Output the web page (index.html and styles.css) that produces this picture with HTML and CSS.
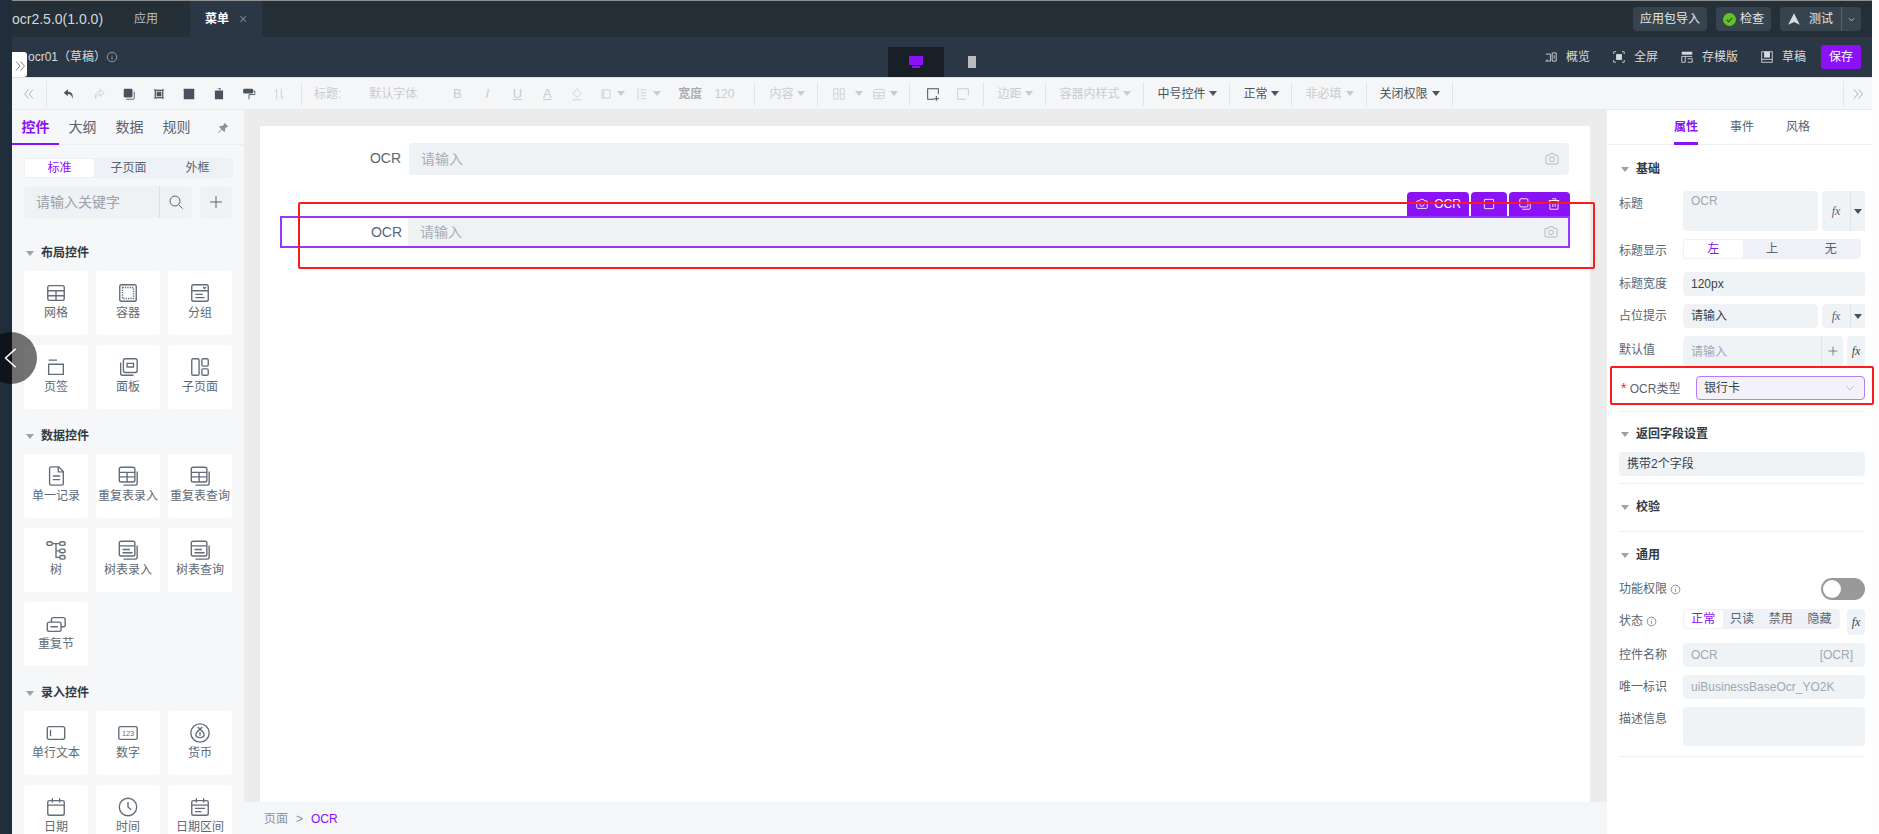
FILE: index.html
```html
<!DOCTYPE html>
<html lang="zh">
<head>
<meta charset="utf-8">
<title>ocr2.5.0</title>
<link rel="stylesheet" href="styles.css">
</head>
<body>
<svg class="defs" aria-hidden="true">
  <symbol id="i-grid" viewBox="0 0 24 24"><rect x="3" y="4" width="18" height="16" rx="2"/><path d="M3 9.500h18M3 15h18M12 9.500V20"/></symbol>
  <symbol id="i-box" viewBox="0 0 24 24"><rect x="3" y="3" width="18" height="18" rx="2"/><rect x="6" y="6" width="12" height="12" stroke-dasharray="1.400 1.200"/></symbol>
  <symbol id="i-group" viewBox="0 0 24 24"><rect x="3" y="3" width="18" height="18" rx="2"/><path d="M3 9.500h18M7 13.500h8M7 17h10M15.500 5.500l1.500 1.500 1.500-1.500"/></symbol>
  <symbol id="i-tab" viewBox="0 0 24 24"><path d="M4 4.500h9M4 9h16v11H4z"/></symbol>
  <symbol id="i-panel" viewBox="0 0 24 24"><rect x="7" y="3" width="15" height="15" rx="2"/><path d="M4 7v12a2 2 0 0 0 2 2h12M11 8h7v4h-7z"/></symbol>
  <symbol id="i-sub" viewBox="0 0 24 24"><rect x="3" y="3" width="8" height="18" rx="1.500"/><rect x="14" y="3" width="7" height="8" rx="1.500"/><rect x="14" y="14" width="7" height="7" rx="1.500"/></symbol>
  <symbol id="i-doc" viewBox="0 0 24 24"><path d="M5 4a2 2 0 0 1 2-2h8l5 5v13a2 2 0 0 1-2 2H7a2 2 0 0 1-2-2zM14.500 2.500V7.500h5M8.500 12h8M8.500 16h8"/></symbol>
  <symbol id="i-rtable" viewBox="0 0 24 24"><rect x="2.500" y="2.500" width="17" height="16" rx="2"/><path d="M2.500 8h17M2.500 13h17M11 8v10.500M22 7v13a2 2 0 0 1-2 2H7"/></symbol>
  <symbol id="i-tree" viewBox="0 0 24 24"><rect x="2" y="3" width="6" height="4" rx="2"/><rect x="16" y="3" width="6" height="4" rx="2"/><rect x="16" y="11" width="6" height="4" rx="2"/><rect x="16" y="18" width="6" height="4" rx="2"/><path d="M8 5h8M12 5v15h4M12 13h4"/></symbol>
  <symbol id="i-ttable" viewBox="0 0 24 24"><rect x="2.500" y="2.500" width="17" height="16" rx="2"/><path d="M2.500 7.500h17M6 11.500h8M6 15h11M22 7v13a2 2 0 0 1-2 2H7"/></symbol>
  <symbol id="i-repeat" viewBox="0 0 24 24"><rect x="2.500" y="10" width="15" height="10" rx="2"/><path d="M7 10V7a2 2 0 0 1 2-2h11a2 2 0 0 1 2 2v6a2 2 0 0 1-2 2h-2.500M6 15h8"/></symbol>
  <symbol id="i-text" viewBox="0 0 24 24"><rect x="2.500" y="5" width="19" height="14" rx="2"/><path d="M6 8.500v7"/></symbol>
  <symbol id="i-money" viewBox="0 0 24 24"><circle cx="12" cy="12" r="10"/><path d="M9.500 5.500 12 8l2.500-2.500M12 8c-3 2-4.500 4-4.500 6 0 2 2 3 4.500 3s4.500-1 4.500-3c0-2-1.500-4-4.500-6zM12 11v4"/></symbol>
  <symbol id="i-date" viewBox="0 0 24 24"><rect x="3" y="5" width="18" height="16" rx="2"/><path d="M3 10h18M8 2.500V7M16 2.500V7"/></symbol>
  <symbol id="i-clock" viewBox="0 0 24 24"><circle cx="12" cy="12" r="9.500"/><path d="M12 6.500V12l3.500 3"/></symbol>
  <symbol id="i-drange" viewBox="0 0 24 24"><rect x="3" y="5" width="18" height="16" rx="2"/><path d="M3 10h18M8 2.500V7M16 2.500V7M6.500 13.500h11M6.500 17h7"/></symbol>
  <symbol id="i-camera" viewBox="0 0 24 24"><path d="M3 8a1.500 1.500 0 0 1 1.500-1.500H8L9.500 4h5L16 6.500h3.500A1.500 1.500 0 0 1 21 8v10a1.500 1.500 0 0 1-1.500 1.500h-15A1.500 1.500 0 0 1 3 18z"/><circle cx="12" cy="12.500" r="3.500"/></symbol>
  <symbol id="i-search" viewBox="0 0 24 24"><circle cx="10.500" cy="10.500" r="7.500"/><path d="m16 16 6 6"/></symbol>
  <symbol id="i-plus" viewBox="0 0 24 24"><path d="M12 3v18M3 12h18"/></symbol>
  <symbol id="i-info" viewBox="0 0 24 24"><circle cx="12" cy="12" r="9.500"/><path d="M12 10.500V17M12 7v1.500"/></symbol>
  <symbol id="i-copy" viewBox="0 0 24 24"><rect x="3" y="3" width="14" height="14" rx="2"/><path d="M7 21h12a2 2 0 0 0 2-2V8"/></symbol>
  <symbol id="i-crop" viewBox="0 0 24 24"><rect x="6" y="6" width="12" height="12"/><path d="M3 5h18M3 19h18M5 3v18M19 3v18" stroke-width="1"/></symbol>
  <symbol id="i-trash" viewBox="0 0 24 24"><path d="M5 6h14v15H5zM3 6h18M9 3h6v3M10 10v7M14 10v7"/></symbol>
  <symbol id="i-dbl-l" viewBox="0 0 24 24"><path d="M11 3 3 12l8 9M20 3l-8 9 8 9"/></symbol>
  <symbol id="i-dbl-r" viewBox="0 0 24 24"><path d="m4 3 8 9-8 9M13 3l8 9-8 9"/></symbol>
</svg>

<div class="app">
  <div class="rail"></div>
  <div class="main">
    <header class="topbar">
      <div class="brand">ocr2.5.0(1.0.0)</div>
      <div class="top-link">应用</div>
      <div class="top-tab"><b>菜单</b><span class="top-x">×</span></div>
      <div class="top-actions">
        <div class="dark-btn">应用包导入</div>
        <div class="dark-btn"><span class="ok-dot"><svg viewBox="0 0 24 24"><path d="m7 12.500 3.500 3.500L17 9"/></svg></span>检查</div>
        <div class="dark-btn split">
          <svg class="rocket" viewBox="0 0 24 24"><path d="M12 2 22 22 12 17 2 22z"/></svg>
          <span class="test-t">测试</span>
          <span class="split-arrow"><svg viewBox="0 0 24 24"><path d="m5 8 7 8 7-8"/></svg></span>
        </div>
      </div>
    </header>

    <div class="subbar">
      <div class="page-title">ocr01（草稿）<svg class="ic ic12"><use href="#i-info"/></svg></div>
      <div class="devices">
        <div class="device active"><svg viewBox="0 0 24 24"><path d="M5 6h14v9H5zM8 16h8v2H8z"/></svg></div>
        <div class="device"><svg viewBox="0 0 24 24"><path d="M8 6h8v12H8z"/></svg></div>
      </div>
      <div class="sub-actions">
        <div class="sub-act"><svg class="ic ic14"><path d="M3 7h8v12H3M14 5h7v14h-7zM17.500 9v6M3 19l3-3"/></svg>概览</div>
        <div class="sub-act"><svg class="ic ic14"><path d="M3 7V3h4M21 7V3h-4M3 17v4h4M21 17v4h-4"/><rect class="solid" x="7" y="7" width="10" height="10"/></svg>全屏</div>
        <div class="sub-act"><svg class="ic ic14"><rect class="solid" x="3" y="3" width="18" height="5"/><path d="M3 11h18M3 11v10h6V11M13 21h8v-6h-8"/></svg>存模版</div>
        <div class="sub-act last"><svg class="ic ic14"><rect x="3" y="3" width="18" height="18"/><rect class="solid" x="7" y="3" width="10" height="10"/><path d="M3 16h18"/></svg>草稿</div>
        <div class="save-btn">保存</div>
      </div>
    </div>

    <div class="toolbar">
      <div class="tb-first"><svg class="ic ic12 thin"><use href="#i-dbl-l"/></svg></div>
      <div class="tb-cell on"><svg class="ic ic14"><path class="solid" d="M10 4 3 10l7 6v-4c4 0 7 2 8 8 2-8-2-12-8-12z"/></svg></div>
      <div class="tb-cell"><svg class="ic ic14"><path d="M14 4l7 6-7 6v-4c-4 0-7 2-8 8-2-8 2-12 8-12z"/></svg></div>
      <div class="tb-cell on"><svg class="ic ic14"><rect class="solid" x="3" y="3" width="15" height="15" rx="2"/><path d="M7 21h12a2 2 0 0 0 2-2V8"/></svg></div>
      <div class="tb-cell on"><svg class="ic ic14"><use href="#i-crop"/><rect class="solid" x="8" y="8" width="8" height="8"/></svg></div>
      <div class="tb-cell on"><svg class="ic ic14"><rect class="solid" x="3" y="3" width="18" height="18" rx="1"/></svg></div>
      <div class="tb-cell on"><svg class="ic ic14"><path class="solid" d="M5 6h14v15H5zM3 5h18M9 2h6v3"/></svg></div>
      <div class="tb-cell on"><svg class="ic ic14"><rect class="solid" x="2" y="3" width="17" height="8" rx="2"/><path d="M19 7h3v6H12v8"/></svg></div>
      <div class="tb-cell"><svg class="ic ic14"><path d="M8 21V4L4 8M16 3v17l4-4"/></svg></div>
      <div class="tb-sep m7"></div>
      <div class="tb-t m12">标题:</div>
      <div class="tb-t m28">默认字体</div>
      <div class="tb-cell m25 fmt">B</div>
      <div class="tb-cell fmt it">I</div>
      <div class="tb-cell fmt ul">U</div>
      <div class="tb-cell fmt ul">A</div>
      <div class="tb-cell"><svg class="ic ic14"><path d="M12 3l7 8-7 7-7-7zM4 22h16"/></svg></div>
      <div class="tb-dd m7"><svg class="ic ic14"><path d="M5 5h14v14H5zM8 5v14"/></svg><i class="car"></i></div>
      <div class="tb-dd m10"><svg class="ic ic14"><path d="M5 3v18M10 5h9M10 10h9M10 15h9M10 20h9"/></svg><i class="car"></i></div>
      <div class="tb-t m17 mid">宽度</div>
      <div class="tb-t m12">120</div>
      <div class="tb-sep m20"></div>
      <div class="tb-dd m14"><span class="tb-t">内容</span><i class="car"></i></div>
      <div class="tb-sep m12"></div>
      <div class="tb-dd m14"><svg class="ic ic14"><path d="M3 3h7v18H3zM14 3h7v18h-7zM3 12h7M14 12h7"/></svg><i class="car wide"></i></div>
      <div class="tb-dd m9"><svg class="ic ic14"><use href="#i-grid"/></svg><i class="car"></i></div>
      <div class="tb-sep m11"></div>
      <div class="tb-cell on m8"><svg class="ic ic16"><path d="M20 12V4H4v16h10M17 15v7M14 19h7"/></svg></div>
      <div class="tb-cell"><svg class="ic ic16"><path d="M20 14V4H4v16h12"/></svg></div>
      <div class="tb-sep m5"></div>
      <div class="tb-group"><span class="tb-t">边距</span><i class="car"></i></div>
      <div class="tb-group"><span class="tb-t">容器内样式</span><i class="car"></i></div>
      <div class="tb-group on"><span class="tb-t">中号控件</span><i class="car"></i></div>
      <div class="tb-group on"><span class="tb-t">正常</span><i class="car"></i></div>
      <div class="tb-group"><span class="tb-t">非必填</span><i class="car"></i></div>
      <div class="tb-group on"><span class="tb-t">关闭权限</span><i class="car"></i></div>
      <div class="tb-last"><svg class="ic ic12 thin"><use href="#i-dbl-r"/></svg></div>
    </div>

    <div class="work">
      <aside class="left">
        <div class="left-tabs">
          <div class="ltab active">控件</div><div class="ltab">大纲</div><div class="ltab">数据</div><div class="ltab">规则</div>
          <svg class="pin" viewBox="0 0 24 24"><path d="M14 3l7 7-3 1-3 3 0 5-2 1-4-4-6 6-1-1 6-6-4-4 1-2h5l3-3z"/></svg>
        </div>
        <div class="seg left-seg"><div class="seg-i active">标准</div><div class="seg-i">子页面</div><div class="seg-i">外框</div></div>
        <div class="search-row">
          <div class="search"><span class="search-t">请输入关键字</span><span class="search-btn"><svg class="ic ic16"><use href="#i-search"/></svg></span></div>
          <div class="add"><svg class="ic ic16"><use href="#i-plus"/></svg></div>
        </div>

        <div class="sec-title first"><i class="tri"></i>布局控件</div>
        <div class="cards">
          <div class="card"><svg class="ic ic22"><use href="#i-grid"/></svg>网格</div>
          <div class="card"><svg class="ic ic22"><use href="#i-box"/></svg>容器</div>
          <div class="card"><svg class="ic ic22"><use href="#i-group"/></svg>分组</div>
          <div class="card"><svg class="ic ic22"><use href="#i-tab"/></svg>页签</div>
          <div class="card"><svg class="ic ic22"><use href="#i-panel"/></svg>面板</div>
          <div class="card"><svg class="ic ic22"><use href="#i-sub"/></svg>子页面</div>
        </div>
        <div class="sec-title"><i class="tri"></i>数据控件</div>
        <div class="cards">
          <div class="card"><svg class="ic ic22"><use href="#i-doc"/></svg>单一记录</div>
          <div class="card"><svg class="ic ic22"><use href="#i-rtable"/></svg>重复表录入</div>
          <div class="card"><svg class="ic ic22"><use href="#i-rtable"/></svg>重复表查询</div>
          <div class="card"><svg class="ic ic22"><use href="#i-tree"/></svg>树</div>
          <div class="card"><svg class="ic ic22"><use href="#i-ttable"/></svg>树表录入</div>
          <div class="card"><svg class="ic ic22"><use href="#i-ttable"/></svg>树表查询</div>
          <div class="card"><svg class="ic ic22"><use href="#i-repeat"/></svg>重复节</div>
        </div>
        <div class="sec-title"><i class="tri"></i>录入控件</div>
        <div class="cards">
          <div class="card"><svg class="ic ic22"><use href="#i-text"/></svg>单行文本</div>
          <div class="card"><svg class="ic ic22" viewBox="0 0 24 24"><rect x="2" y="5" width="20" height="14" rx="1.500"/><text x="12" y="15.500" class="num-t">123</text></svg>数字</div>
          <div class="card"><svg class="ic ic22"><use href="#i-money"/></svg>货币</div>
          <div class="card"><svg class="ic ic22"><use href="#i-date"/></svg>日期</div>
          <div class="card"><svg class="ic ic22"><use href="#i-clock"/></svg>时间</div>
          <div class="card"><svg class="ic ic22"><use href="#i-drange"/></svg>日期区间</div>
        </div>
      </aside>

      <section class="center">
        <div class="canvas">
          <div class="form-row plain">
            <label class="f-label">OCR</label>
            <div class="f-input"><span>请输入</span><svg class="ic ic16"><use href="#i-camera"/></svg></div>
          </div>
          <div class="form-row selected">
            <div class="actions">
              <div class="act-tab"><svg class="ic ic14"><use href="#i-camera"/></svg>OCR</div>
              <div class="act-tab"><svg class="ic ic14"><rect x="4" y="4" width="16" height="16" rx="1"/></svg></div>
              <div class="act-tab pair"><svg class="ic ic14"><use href="#i-copy"/></svg><svg class="ic ic14"><use href="#i-trash"/></svg></div>
            </div>
            <label class="f-label">OCR</label>
            <div class="f-input"><span>请输入</span><svg class="ic ic16"><use href="#i-camera"/></svg></div>
          </div>
        </div>
        <div class="crumbs"><span>页面</span><span>&gt;</span><span class="crumb-on">OCR</span></div>
      </section>

      <aside class="right">
        <div class="rtabs"><div class="rtab active">属性</div><div class="rtab">事件</div><div class="rtab">风格</div></div>
        <div class="rbody">
          <div class="rsec-title"><i class="tri"></i>基础</div>
          <div class="prow r-title">
            <div class="plabel">标题</div>
            <div class="pfield ghost top">OCR</div>
            <div class="fxbox"><em>fx</em><i class="car dark"></i></div>
          </div>
          <div class="prow r-seg">
            <div class="plabel">标题显示</div>
            <div class="seg wide"><div class="seg-i active">左</div><div class="seg-i">上</div><div class="seg-i">无</div></div>
          </div>
          <div class="prow"><div class="plabel">标题宽度</div><div class="pfield">120px</div></div>
          <div class="prow">
            <div class="plabel">占位提示</div>
            <div class="pfield">请输入</div>
            <div class="fxbox"><em>fx</em><i class="car dark"></i></div>
          </div>
          <div class="prow r-def">
            <div class="plabel">默认值</div>
            <div class="pfield ghost def"><span>请输入</span><span class="def-plus"><svg class="ic ic12"><use href="#i-plus"/></svg></span></div>
            <div class="fx-mini"><em>fx</em></div>
          </div>
          <div class="prow r-type">
            <div class="plabel typ"><span class="req">*</span> OCR类型</div>
            <div class="pselect"><span>银行卡</span><svg class="chev" viewBox="0 0 24 24"><path d="m3 7 9 10 9-10"/></svg></div>
          </div>
          <div class="divider"></div>

          <div class="rsec-title tight"><i class="tri"></i>返回字段设置</div>
          <div class="pfield full">携带2个字段</div>
          <div class="divider"></div>

          <div class="rsec-title check"><i class="tri"></i>校验</div>
          <div class="divider"></div>

          <div class="rsec-title common"><i class="tri"></i>通用</div>
          <div class="prow r-switch">
            <div class="plabel">功能权限 <svg class="ic ic11"><use href="#i-info"/></svg></div>
            <div class="switch"><i></i></div>
          </div>
          <div class="prow r-state">
            <div class="plabel">状态 <svg class="ic ic11"><use href="#i-info"/></svg></div>
            <div class="seg state"><div class="seg-i active">正常</div><div class="seg-i">只读</div><div class="seg-i">禁用</div><div class="seg-i">隐藏</div></div>
            <div class="fx-mini tall"><em>fx</em></div>
          </div>
          <div class="prow"><div class="plabel">控件名称</div><div class="pfield ghost between"><span>OCR</span><span>[OCR]</span></div></div>
          <div class="prow"><div class="plabel">唯一标识</div><div class="pfield ghost">uiBusinessBaseOcr_YO2K</div></div>
          <div class="prow r-desc"><div class="plabel">描述信息</div><div class="pfield area"></div></div>
          <div class="divider"></div>
        </div>
      </aside>
    </div>
  </div>
</div>

<div class="expand-tab"><svg class="ic ic12 thin"><use href="#i-dbl-r"/></svg></div>
<div class="round-back"><svg viewBox="0 0 24 24"><path d="M17 2 6 12l11 10"/></svg></div>
<div class="mark mark-row"></div>
<div class="mark mark-type"></div>
</body>
</html>
```
FILE: styles.css
```css
* { box-sizing: border-box; }
html, body { margin: 0; height: 100%; }
body {
  width: 1879px; height: 834px; overflow: hidden; position: relative;
  background: #fdfdfd;
  font: 12px/16px "Liberation Sans", "Noto Sans CJK SC", sans-serif;
  color: #5a6470;
}
.defs { position: absolute; width: 0; height: 0; }
.app { display: flex; width: 1872px; height: 834px; }
.rail { width: 12px; background: #1f2e3a; flex: none; }
.main { flex: 1; display: flex; flex-direction: column; min-width: 0; }

.ic { fill: none; stroke: currentColor; stroke-width: 1.5; flex: none; }
.ic .solid, .solid { fill: currentColor; stroke: none; }
.thin { stroke-width: 1.6; }
.ic11 { width: 11px; height: 11px; }
.ic12 { width: 12px; height: 12px; }
.ic14 { width: 14px; height: 14px; }
.ic16 { width: 16px; height: 16px; }
.ic22 { width: 22px; height: 22px; }
svg.ic14 { overflow: visible; }
.ic14 > *, .ic16 > path { transform: scale(var(--s, 1)); }
.ic14 { --s: .5833; }
.ic16 { --s: .6667; }
.ic14 > use, .ic16 > use { transform: none; }
.num-t { font: 8px "Liberation Sans", sans-serif; text-anchor: middle; fill: currentColor; stroke: none; }

/* top bar */
.topbar {
  height: 37px; flex: none; display: flex; align-items: stretch;
  background: #242f38; border-top: 1px solid #8d8f90; color: #d3d7da;
}
.brand { font-size: 14px; line-height: 36px; width: 122px; }
.top-link { line-height: 36px; width: 56px; color: #b8bec3; }
.top-tab { width: 72px; background: #2b3744; display: flex; align-items: center; padding-left: 15px; color: #fff; }
.top-tab b { font-weight: 700; }
.top-x { margin-left: 10px; color: #76808a; font-size: 14px; }
.top-actions { margin-left: auto; margin-right: 11px; display: flex; gap: 9px; align-items: center; }
.dark-btn {
  height: 24px; padding: 0 7px; background: #38444d; border-radius: 4px;
  display: flex; align-items: center; gap: 4px; color: #e4e7e9;
}
.ok-dot { width: 13px; height: 13px; border-radius: 50%; background: #63c22a; display: block; }
.ok-dot svg { display: block; width: 13px; height: 13px; fill: none; stroke: #2e5f17; stroke-width: 2.500; }
.split { padding-right: 0; gap: 0; }
.rocket { width: 14px; height: 14px; fill: #d9dcde; margin-right: 8px; }
.test-t { margin-right: 8px; }
.split-arrow { width: 20px; height: 24px; border-left: 1px solid #56616a; display: flex; align-items: center; justify-content: center; }
.split-arrow svg { width: 9px; height: 9px; fill: none; stroke: #c3c8cc; stroke-width: 2; }

/* second bar */
.subbar {
  height: 40px; flex: none; display: flex; align-items: flex-start; position: relative;
  background: #2b3744; color: #d6dadd;
}
.page-title { margin: 12px 0 0 16px; display: flex; align-items: center; gap: 0; flex: none; width: 860px; color: #d6dadd; }
.page-title .ic { color: #b3b9be; }
.devices { display: flex; height: 30px; margin-top: 10px; flex: none; }
.device { width: 56px; display: flex; align-items: center; justify-content: center; }
.device.active { background: #181f27; }
.device svg { width: 24px; height: 24px; fill: #b9bdc1; }
.device.active svg { fill: #8a12f5; }
.sub-actions { margin-left: auto; margin-right: 11px; margin-top: 8px; display: flex; align-items: center; height: 24px; }
.sub-act { display: flex; align-items: center; gap: 8px; margin-right: 22px; color: #d6dadd; }
.sub-act.last { margin-right: 15px; }
.save-btn { width: 40px; height: 24px; line-height: 24px; text-align: center; color: #fff; background: #8a12f5; border-radius: 3px; }

/* toolbar */
.toolbar {
  height: 33px; flex: none; display: flex; align-items: center;
  background: #f5f6f8; border-top: 1px solid #dfe1e4; border-bottom: 1px solid #e8e9eb; color: #c8ccd1;
}
.tb-first { width: 35px; height: 26px; display: flex; align-items: center; justify-content: center; border-right: 1px solid #e4e6e9; margin-right: 7px; color: #9aa1a9; }
.tb-cell { width: 30px; flex: none; display: flex; justify-content: center; align-items: center; }
.on { color: #4a535d; }
.tb-sep { width: 1px; height: 24px; background: #e2e4e7; flex: none; }
.tb-t { flex: none; white-space: nowrap; }
.tb-dd { display: flex; align-items: center; gap: 4px; flex: none; }
.car { display: block; width: 0; height: 0; border: 4px solid transparent; border-top: 5px solid currentColor; border-bottom: 0; flex: none; }
.car.wide { margin-left: 5px; }
.mid { color: #a8adb3; font-weight: 700; }
.fmt { font-size: 13px; }
.it { font-style: italic; }
.ul { text-decoration: underline; }
.m5 { margin-left: 5px; }
.m7 { margin-left: 7px; }
.m8 { margin-left: 8px; }
.m9 { margin-left: 9px; }
.m10 { margin-left: 10px; }
.m11 { margin-left: 11px; }
.m12 { margin-left: 12px; }
.m14 { margin-left: 14px; }
.m17 { margin-left: 17px; }
.m20 { margin-left: 20px; }
.m25 { margin-left: 25px; }
.m28 { margin-left: 28px; }
.tb-group { height: 24px; flex: none; display: flex; align-items: center; gap: 4px; padding: 0 12px 0 13px; border-right: 1px solid #e2e4e7; }
.tb-last { margin-left: auto; width: 29px; height: 26px; display: flex; align-items: center; justify-content: center; border-left: 1px solid #e4e6e9; color: #9aa1a9; }

/* workspace */
.work { flex: 1; display: flex; min-height: 0; }

.left { width: 232px; flex: none; background: #f6f7f9; overflow: hidden; }
.left-tabs { height: 35px; display: flex; align-items: center; position: relative; border-bottom: 1px solid #eceef1; font-size: 14px; }
.ltab { width: 47px; text-align: center; color: #5a6470; height: 35px; line-height: 34px; }
.ltab.active { color: #8a12f5; font-weight: 700; border-bottom: 2px solid #8a12f5; }
.pin { width: 13px; height: 13px; fill: #8a93a0; margin-left: 17px; }
.seg { display: flex; background: #eef1f5; border-radius: 4px; padding: 1px; }
.seg-i { flex: 1; text-align: center; line-height: 18px; color: #5a6470; }
.seg-i.active { background: #fff; color: #8a12f5; border-radius: 3px; }
.left-seg { margin: 13px 11px 0 12px; }
.search-row { display: flex; margin: 8px 12px 0; gap: 8px; }
.search { width: 168px; height: 32px; background: #eff2f5; border-radius: 4px; display: flex; align-items: center; justify-content: space-between; }
.search-t { padding-left: 12px; font-size: 14px; color: #9aa1a9; }
.search-btn { width: 33px; height: 32px; border-left: 1px solid #dde0e4; display: flex; align-items: center; justify-content: center; color: #5a6470; }
.add { width: 32px; height: 32px; background: #eff2f5; border-radius: 4px; display: flex; align-items: center; justify-content: center; color: #5a6470; }
.sec-title { display: flex; align-items: center; gap: 7px; font-weight: 700; color: #333a42; margin: 18px 0 9px 14px; height: 18px; }
.sec-title.first { margin-top: 26px; }
.tri { width: 0; height: 0; display: block; border: 4px solid transparent; border-top: 5px solid #9aa1ab; border-bottom: 0; flex: none; }
.cards { display: grid; grid-template-columns: repeat(3, 64px); gap: 10px 8px; margin-left: 12px; }
.card { height: 64px; background: #fff; border-radius: 4px; display: flex; flex-direction: column; align-items: center; padding-top: 11px; color: #5f6975; white-space: nowrap; }
.card .ic { color: #636d7a; margin-bottom: 1px; }

.center { flex: 1; background: #ececec; display: flex; flex-direction: column; min-width: 0; }
.canvas { flex: 1; background: #fff; margin: 16px 17px 0 16px; padding: 17px 20px 0; }
.form-row { display: flex; height: 32px; width: 1290px; position: relative; }
.form-row.plain { padding-left: 1px; margin-bottom: 41px; }
.form-row.plain .f-input { border-radius: 4px; margin-right: 1px; }
.form-row.selected { border: 2px solid #9a34ff; }
.f-label { width: 120px; text-align: right; font-size: 14px; line-height: 30px; color: #5a6675; flex: none; }
.selected .f-label { line-height: 28px; }
.f-input { flex: 1; margin-left: 8px; background: #eff2f5; display: flex; align-items: center; justify-content: space-between; padding: 0 9px 0 12px; font-size: 14px; color: #a7adb4; }
.selected .f-input { margin-left: 6px; }
.f-input .ic { color: #b4b8bd; }
.actions { position: absolute; right: -2px; top: -26px; display: flex; gap: 2px; height: 24px; color: #fff; }
.act-tab { background: #8a12f5; border-radius: 4px 4px 0 0; display: flex; align-items: center; justify-content: center; gap: 5px; padding: 0 10px; font-size: 12px; height: 24px; }
.act-tab:first-child { width: 62px; padding: 0; }
.act-tab:nth-child(2) { width: 36px; padding: 0; }
.act-tab.pair { width: 61px; padding: 0; gap: 15px; }
.crumbs { height: 32px; flex: none; background: #f5f6f8; display: flex; gap: 8px; align-items: center; padding: 1px 0 0 20px; color: #8b929b; }
.crumb-on { color: #8a12f5; }

.right { width: 265px; flex: none; background: #fff; }
.rtabs { height: 35px; display: flex; border-bottom: 1px solid #eceef1; padding-left: 67px; gap: 32px; }
.rtab { width: 24px; height: 35px; line-height: 34px; color: #5a6470; white-space: nowrap; }
.rtab.active { color: #8a12f5; font-weight: 700; border-bottom: 3px solid #8a12f5; }
.rbody { padding: 0 7px 0 12px; }
.rsec-title { display: flex; align-items: center; gap: 7px; font-weight: 700; color: #333a42; height: 16px; margin: 16px 0 14px 2px; }
.rsec-title.tight { margin: 14px 0 10px 2px; }
.rsec-title.check { margin: 15px 0 16px 2px; }
.rsec-title.common { margin: 15px 0 15px 2px; }
.prow { display: flex; align-items: flex-start; margin-bottom: 8px; position: relative; }
.plabel { width: 64px; flex: none; line-height: 24px; white-space: nowrap; display: flex; align-items: center; gap: 3px; color: #5a6470; }
.pfield { flex: 1; height: 24px; line-height: 24px; background: #f0f3f6; border-radius: 4px; padding: 0 8px; color: #39414a; white-space: nowrap; }
.pfield.full { flex: none; margin-bottom: 7px; }
.pfield.ghost { color: #a2a8af; }
.pfield.top { height: 40px; line-height: 20px; }
.r-title .plabel { line-height: 26px; }
.fxbox { width: 43px; margin-left: 4px; height: 24px; background: #f0f3f6; border-radius: 4px 0 0 4px; display: flex; align-items: center; color: #5a6470; flex: none; }
.r-title .fxbox { height: 40px; }
.fxbox em { width: 29px; text-align: center; font-family: "Liberation Serif", serif; border-right: 1px solid #e0e3e7; height: 100%; display: flex; align-items: center; justify-content: center; }
.fxbox .car { margin-left: 3px; }
.car.dark { color: #4a535d; }
.r-seg { margin-bottom: 9px; }
.seg.wide { width: 178px; height: 20px; }
.r-def { margin-bottom: 0; height: 30px; }
.r-def .plabel { line-height: 28px; }
.def { padding-right: 0; display: flex; justify-content: space-between; height: 30px; line-height: 32px; }
.def-plus { width: 22px; border-left: 1px solid #e0e3e7; display: flex; align-items: center; justify-content: center; color: #5a6470; }
.fx-mini { width: 18px; height: 24px; background: #f0f3f6; margin-left: 4px; border-radius: 3px; display: flex; align-items: center; justify-content: center; flex: none; color: #39414a; font-family: "Liberation Serif", serif; }
.r-def .fx-mini { height: 30px; }
.fx-mini.tall { height: 26px; margin-left: 7px; }
.r-type { margin: 10px 0; }
.plabel.typ { width: 77px; display: block; padding-left: 2px; }
.req { color: #f22; font-size: 14px; }
.pselect { flex: 1; height: 24px; border: 1px solid #b67cf8; border-radius: 4px; background: #f2f2f8; display: flex; align-items: center; justify-content: space-between; padding: 0 9px 0 7px; color: #39414a; }
.chev { width: 10px; height: 10px; fill: none; stroke: #9aa1a9; stroke-width: 1.500; }
.divider { height: 1px; background: #eceef1; }
.r-switch { height: 22px; margin-bottom: 9px; justify-content: space-between; }
.r-switch .plabel { line-height: 22px; }
.switch { width: 44px; height: 22px; border-radius: 11px; background: #999; position: relative; }
.switch i { position: absolute; left: 2px; top: 2px; width: 18px; height: 18px; border-radius: 50%; background: #fff; display: block; }
.r-state { margin-bottom: 8px; }
.seg.state { width: 157px; height: 20px; }
.between { display: flex; justify-content: space-between; padding-right: 12px; }
.r-desc { margin-bottom: 10px; }
.area { height: 39px; }

/* overlays */
.expand-tab { position: absolute; left: 12px; top: 52px; width: 15px; height: 25px; background: #fff; border-radius: 0 3px 3px 0; color: #56606b; display: flex; align-items: center; justify-content: center; padding-top: 3px; }
.round-back { position: absolute; left: -15px; top: 332px; width: 52px; height: 52px; border-radius: 50%; background: rgba(0, 0, 0, .55); display: flex; align-items: center; justify-content: center; }
.round-back svg { width: 22px; height: 22px; fill: none; stroke: #fff; stroke-width: 1.600; }
.mark { position: absolute; border: 2px solid #ff1a1a; border-radius: 2px; }
.mark-row { left: 298px; top: 202px; width: 1297px; height: 67px; }
.mark-type { left: 1610px; top: 366px; width: 264px; height: 39px; }
```
